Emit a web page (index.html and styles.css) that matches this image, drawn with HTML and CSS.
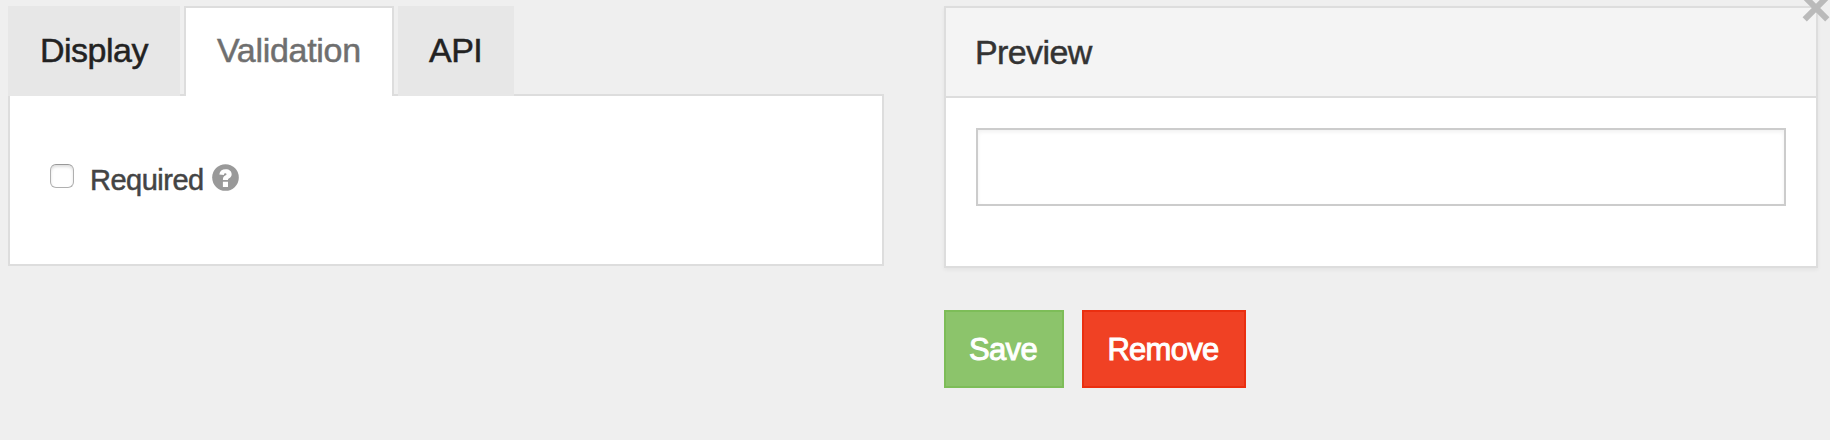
FILE: index.html
```html
<!DOCTYPE html>
<html lang="en">
<head>
<meta charset="utf-8">
<title>Field settings</title>
<link rel="stylesheet" href="styles.css">
</head>
<body>
<main class="dialog">
  <section class="settings">
    <nav class="tabs">
      <a class="tab tab-display">Display</a>
      <a class="tab tab-active">Validation</a>
      <a class="tab tab-api">API</a>
    </nav>
    <div class="tab-panel">
      <label class="check">
        <span class="checkbox"></span>
        <span class="check-label">Required</span>
        <svg class="help" viewBox="0 0 28 28" aria-label="Help">
          <circle cx="14" cy="14" r="13.8" fill="#999"/>
          <path d="M7.6 10.8 C8 7.2 10.4 5.4 14.2 5.4 C17.9 5.4 20.4 7.5 20.4 10.6 C20.4 12.8 19.1 14 17.7 14.9 C16.7 15.6 16.6 15.9 16.6 16.6 H11.3 C11.3 14 12.1 12.9 13.6 12 C14.6 11.4 15 11.1 15 10.5 C15 9.9 14.7 9.7 14 9.7 C13.1 9.7 12.6 10.1 12.3 11.4 Z M11.3 18.4 H16.6 V23.8 H11.3 Z" fill="#fff"/>
        </svg>
      </label>
    </div>
  </section>
  <section class="side">
    <div class="card">
      <h2 class="card-title">Preview</h2>
      <div class="card-body"><input class="field" type="text" aria-label="Preview"></div>
    </div>
    <div class="actions">
      <button class="btn btn-save">Save</button>
      <button class="btn btn-remove">Remove</button>
    </div>
  </section>
  <svg class="close" viewBox="0 0 28 28" aria-label="Close">
    <path d="M2.7 2.7 L25.3 25.3 M25.3 2.7 L2.7 25.3" stroke="#bababa" stroke-width="6" fill="none"/>
  </svg>
</main>
</body>
</html>
```
FILE: styles.css
```css
* { box-sizing: border-box; }
body {
  margin: 0;
  height: 440px;
  overflow: hidden;
  background: #efefef;
  font-family: "Liberation Sans", Arial, sans-serif;
}
.dialog {
  position: relative;
  display: flex;
  gap: 60px;
  height: 440px;
  padding: 6px 12px 0 8px;
  overflow: hidden;
}
.settings { width: 876px; }
.tabs {
  display: flex;
  gap: 4px;
  height: 90px;
  margin-bottom: -2px;
}
.tab {
  height: 90px;
  padding-left: 32px;
  background: #e7e7e7;
  color: #222;
  font-size: 34px;
  line-height: 89px;
  letter-spacing: -0.5px;
  white-space: nowrap;
  position: relative;
  -webkit-text-stroke: 0.5px currentColor;
}
.tab-display { width: 172px; }
.tab-active {
  width: 210px;
  padding-left: 31px;
  background: #fff;
  color: #6f6f6f;
  border: 2px solid #ddd;
  border-bottom: 0;
  line-height: 85px;
  letter-spacing: -0.3px;
}
.tab-api { width: 116px; padding-left: 31px; }
.tab-panel {
  height: 172px;
  padding: 68px 0 0 40px;
  background: #fff;
  border: 2px solid #ddd;
}
.check { display: flex; align-items: flex-start; }
.checkbox {
  width: 24px;
  height: 24px;
  border: 1px solid #b0b0b0;
  border-top-color: #999;
  border-radius: 6px;
  background: #fff;
  box-shadow: inset 0 2px 3px rgba(0, 0, 0, 0.13);
}
.check-label {
  width: 115px;
  margin-left: 16px;
  color: #444;
  font-size: 29px;
  line-height: 33px;
  letter-spacing: -0.5px;
  -webkit-text-stroke: 0.5px #444;
}
.help { width: 27px; height: 27px; margin-left: 7px; }
.side { width: 874px; }
.card {
  height: 262px;
  background: #fff;
  border: 2px solid #ddd;
  box-shadow: 0 2px 4px rgba(0, 0, 0, 0.05);
}
.card-title {
  height: 90px;
  margin: 0;
  padding-left: 29px;
  background: #f4f4f4;
  border-bottom: 2px solid #ddd;
  color: #333;
  font-size: 34px;
  font-weight: 400;
  line-height: 89px;
  letter-spacing: -0.6px;
  -webkit-text-stroke: 0.5px #333;
}
.card-body { padding: 30px; }
.field {
  display: block;
  width: 100%;
  height: 78px;
  border: 2px solid #ccc;
  background: #fff;
  box-shadow: inset 0 2px 4px rgba(0, 0, 0, 0.06);
}
.actions { display: flex; gap: 18px; margin-top: 42px; }
.btn {
  height: 78px;
  padding: 2px 2px 0 0;
  color: #fff;
  font-family: inherit;
  font-size: 31px;
  line-height: 72px;
  letter-spacing: -0.7px;
  -webkit-text-stroke: 1px #fff;
}
.btn-save { width: 120px; background: #8cc46b; border: 2px solid #7dbd58; }
.btn-remove { width: 164px; background: #f04124; border: 2px solid #ea2f10; }
.close {
  position: absolute;
  top: -6px;
  right: 0;
  width: 28px;
  height: 28px;
}
```
